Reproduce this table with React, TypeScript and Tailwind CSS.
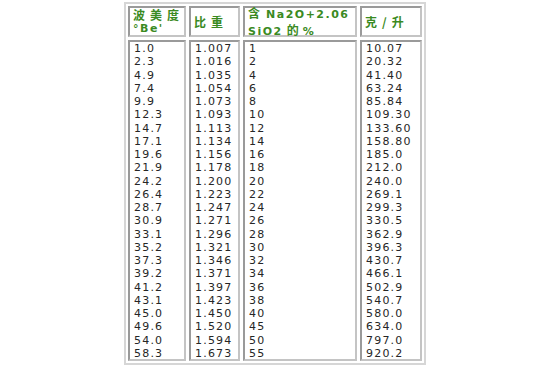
const col1 = ["1.0", "2.3", "4.9", "7.4", "9.9", "12.3", "14.7", "17.1", "19.6", "21.9", "24.2", "26.4", "28.7", "30.9", "33.1", "35.2", "37.3", "39.2", "41.2", "43.1", "45.0", "49.6", "54.0", "58.3"];
const col2 = ["1.007", "1.016", "1.035", "1.054", "1.073", "1.093", "1.113", "1.134", "1.156", "1.178", "1.200", "1.223", "1.247", "1.271", "1.296", "1.321", "1.346", "1.371", "1.397", "1.423", "1.450", "1.520", "1.594", "1.673"];
const col3 = ["1", "2", "4", "6", "8", "10", "12", "14", "16", "18", "20", "22", "24", "26", "28", "30", "32", "34", "36", "38", "40", "45", "50", "55"];
const col4 = ["10.07", "20.32", "41.40", "63.24", "85.84", "109.30", "133.60", "158.80", "185.0", "212.0", "240.0", "269.1", "299.3", "330.5", "362.9", "396.3", "430.7", "466.1", "502.9", "540.7", "580.0", "634.0", "797.0", "920.2"];

const cell = "border-2 border-t-[#9a9a9a] border-l-[#9a9a9a] border-r-[#c4c4c4] border-b-[#c4c4c4] bg-white";
const head = `${cell} h-[31px] pl-[3px] flex flex-col justify-center whitespace-nowrap text-[#3a8a22] font-semibold leading-[14px]`;
const zh = "font-['Noto_Sans_CJK_SC',sans-serif] text-[12px] tracking-[5px]";
const zh1 = "font-['Noto_Sans_CJK_SC',sans-serif] text-[12px]";
const lat = "font-['DejaVu_Sans',sans-serif] text-[11px] tracking-[1.5px]";

const Body = ({ rows }: { rows: string[] }) => (
  <div className={`${cell} h-[321px] pl-[4px] text-[#262626] text-[11px] leading-[13.25px] tracking-[1.2px] font-['DejaVu_Sans',sans-serif]`}>
    {rows.map((r, i) => (
      <div key={i}>{r}</div>
    ))}
  </div>
);

export default function App() {
  return (
    <div className="w-[550px] h-[367px] bg-white overflow-hidden pt-[2px]">
      <div className="mx-auto w-[302px] border-2 border-[#d6d6d6] p-[2px] grid grid-cols-[58px_51px_114px_62px] gap-[3px]">
        <div className={head}>
          <span className={zh}>波美度</span>
          <span className={lat}>°Be'</span>
        </div>
        <div className={head}>
          <span className={zh}>比重</span>
        </div>
        <div className={head}>
          <span>
            <span className={`${zh1} mr-[6px]`}>含</span>
            <span className={lat}>Na2O+2.06</span>
          </span>
          <span>
            <span className={`${lat} mr-[4px]`}>SiO2</span>
            <span className={`${zh1} mr-[4px]`}>的</span>
            <span className={lat}>%</span>
          </span>
        </div>
        <div className={head}>
          <span className={zh}>克/升</span>
        </div>
        <Body rows={col1} />
        <Body rows={col2} />
        <Body rows={col3} />
        <Body rows={col4} />
      </div>
    </div>
  );
}
